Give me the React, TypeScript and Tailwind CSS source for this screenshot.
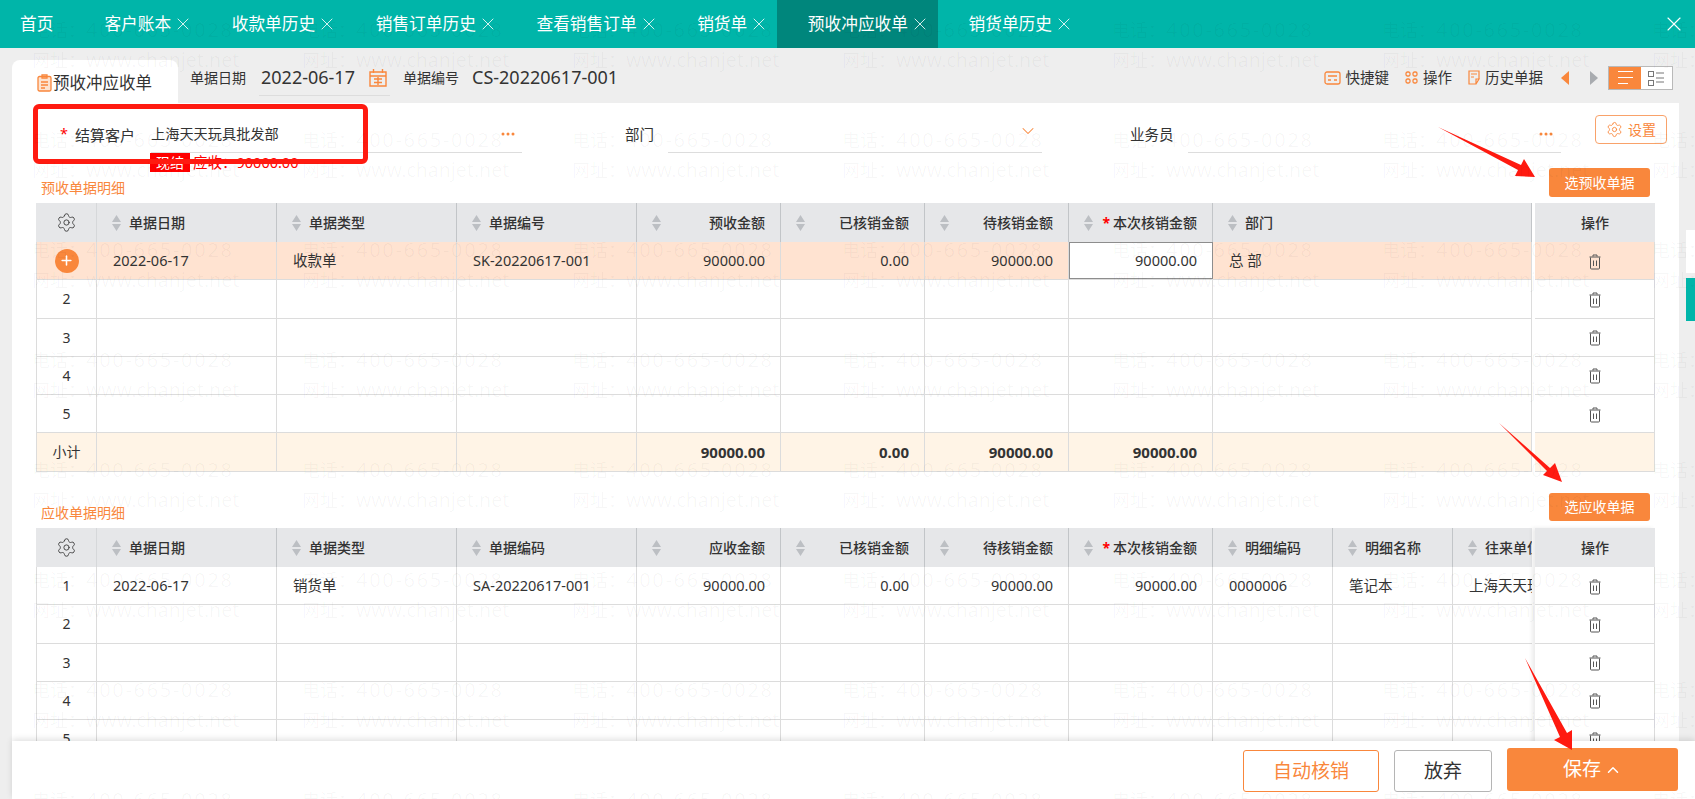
import { Settings, X, ChevronDown, ChevronUp, Plus } from "lucide-react"

const tabs = [
  { label: "客户账本" },
  { label: "收款单历史" },
  { label: "销售订单历史" },
  { label: "查看销售订单" },
  { label: "销货单" },
  { label: "预收冲应收单", active: true },
  { label: "销货单历史" },
]

interface Column {
  label: string
  right?: boolean
  required?: boolean
}

const advanceCols: Column[] = [
  { label: "单据日期" },
  { label: "单据类型" },
  { label: "单据编号" },
  { label: "预收金额", right: true },
  { label: "已核销金额", right: true },
  { label: "待核销金额", right: true },
  { label: "本次核销金额", right: true, required: true },
  { label: "部门" },
]

const receivableCols: Column[] = [
  { label: "单据日期" },
  { label: "单据类型" },
  { label: "单据编码" },
  { label: "应收金额", right: true },
  { label: "已核销金额", right: true },
  { label: "待核销金额", right: true },
  { label: "本次核销金额", right: true, required: true },
  { label: "明细编码" },
  { label: "明细名称" },
  { label: "往来单位" },
]

const Sort = () => (
  <svg width="9" height="16" viewBox="0 0 9 16" className="shrink-0">
    <path d="M4.5 0 L9 7 H0 Z M4.5 16 L0 9 H9 Z" fill="#bcbfc3" />
  </svg>
)

const Trash = () => (
  <svg width="14" height="16" viewBox="0 0 14 16" fill="none" stroke="#555" strokeWidth="1" className="mt-[2px]">
    <path d="M5 2.5V1h4v1.5M1.5 3h11M2.5 3.5v10.5a1 1 0 0 0 1 1h7a1 1 0 0 0 1-1V3.5M5.5 6.5v5.5M8.5 6.5v5.5" />
  </svg>
)

const Dots = () => (
  <svg width="14" height="4" viewBox="0 0 14 4" fill="#f9873c">
    <circle cx="2" cy="2" r="1.5" />
    <circle cx="7" cy="2" r="1.5" />
    <circle cx="12" cy="2" r="1.5" />
  </svg>
)

interface TableProps {
  grid: string
  cols: Column[]
  rows: string[][]
  highlightFirst?: boolean
  total?: string[]
  shadow?: boolean
}

const DataTable = ({ grid, cols, rows, highlightFirst, total, shadow }: TableProps) => {
  const cellText = (col: Column) => (col.right ? "justify-end pr-[15px]" : "pl-[16px]")
  return (
    <div className="flex gap-[3px]">
      <div className="w-[1496px] overflow-hidden">
        <div className={`grid h-[39px] bg-[#e6e7e9] ${grid}`}>
          <div className="flex items-center justify-center border-r border-[#d6d8da]">
            <Settings size={21} strokeWidth={1.1} className="text-[#444]" />
          </div>
          {cols.map((col) => (
            <div key={col.label} className="flex items-center overflow-hidden whitespace-nowrap border-r border-[#c2c5c8] pl-[15px] pr-[15px] text-[14px] font-medium text-[#333]">
              <Sort />
              <span className={col.right ? "ml-auto" : "ml-[8px]"}>
                {col.required && <span className="mr-[3px] font-bold text-[#f00]">*</span>}
                {col.label}
              </span>
            </div>
          ))}
        </div>
        {rows.map((row, i) => (
          <div key={i} className={`grid h-[38.25px] border-b border-[#dcdcdc] ${grid} ${highlightFirst && i === 0 ? "bg-[#ffe3d1]" : ""}`}>
            <div className="flex items-center justify-center border-x border-[#dcdcdc] text-[14px] text-[#333]">
              {highlightFirst && i === 0 ? (
                <span className="flex size-[24px] items-center justify-center rounded-full bg-[#f9873c]">
                  <Plus size={15} strokeWidth={2.5} className="text-white" />
                </span>
              ) : (
                i + 1
              )}
            </div>
            {cols.map((col, j) => {
              const isInput = highlightFirst && i === 0 && col.required
              return (
                <div key={col.label} className={`flex items-center overflow-hidden whitespace-nowrap border-r text-[14.5px] text-[#333] ${cellText(col)} ${isInput ? "border border-[#8d8d8d] bg-white" : "border-[#dcdcdc]"}`}>
                  {row[j]}
                </div>
              )
            })}
          </div>
        ))}
        {total && (
          <div className={`grid h-[38.25px] border-b border-[#dcdcdc] bg-[#fff4e6] ${grid}`}>
            <div className="flex items-center justify-center border-x border-[#dcdcdc] text-[14px] text-[#333]">小计</div>
            {cols.map((col, j) => (
              <div key={col.label} className={`flex items-center border-r border-[#dcdcdc] text-[15px] font-bold text-[#333] ${cellText(col)}`}>
                {total[j]}
              </div>
            ))}
          </div>
        )}
      </div>
      <div className={`w-[120px] ${shadow ? "shadow-[-3px_0_4px_rgba(0,0,0,0.08)]" : ""}`}>
        <div className="flex h-[39px] items-center justify-center bg-[#e6e7e9] text-[14px] font-medium text-[#333]">操作</div>
        {rows.map((_, i) => (
          <div key={i} className={`flex h-[38.25px] items-center justify-center border-b border-r border-[#dcdcdc] ${highlightFirst && i === 0 ? "bg-[#ffe3d1]" : ""}`}>
            <Trash />
          </div>
        ))}
        {total && <div className="h-[38.25px] border-b border-r border-[#dcdcdc] bg-[#fff4e6]" />}
      </div>
    </div>
  )
}

const Watermark = () => (
  <div className="pointer-events-none absolute inset-0 z-30 overflow-hidden">
    {Array.from({ length: 8 }).map((_, r) => (
      <div key={r} className="flex h-[110px] pl-[32px] pt-[15px]">
        {Array.from({ length: 7 }).map((_, c) => (
          <div key={c} className="w-[270px] shrink-0 whitespace-nowrap text-[rgba(0,0,0,0.035)]">
            <div className="h-[30px] text-[20px] leading-[30px] tracking-[1.7px]">
              <span className="text-[18px] tracking-normal">电话：</span>400-665-0028
            </div>
            <div className="h-[30px] text-[19.5px] leading-[30px]">
              <span className="text-[18px]">网址：</span>www.chanjet.net
            </div>
          </div>
        ))}
      </div>
    ))}
  </div>
)

export default function App() {
  return (
    <div className="relative flex h-screen flex-col overflow-hidden bg-[#eee] font-['Noto_Sans','Noto_Sans_CJK_SC',sans-serif]">
      {/* tab bar */}
      <div className="flex h-12 shrink-0 items-stretch bg-[#00b5a9] text-[16.7px] text-white">
        <div className="flex items-center pl-[20px] pr-[20px]">首页</div>
        {tabs.map((tab) => (
          <div key={tab.label} className={`flex items-center gap-[2px] pl-[31px] pr-[7.6px] ${tab.active ? "bg-[#00867c]" : ""}`}>
            {tab.label}
            <X size={20} strokeWidth={1} />
          </div>
        ))}
        <div className="ml-auto flex items-center pr-[9px]">
          <X size={24} strokeWidth={1.1} />
        </div>
      </div>

      {/* toolbar */}
      <div className="flex h-[55px] shrink-0 pl-3 pr-[22px] text-[#333]">
        <div className="mt-[12px] flex h-[43px] w-[166px] items-center gap-[1px] rounded-t-lg bg-white pl-[25px] pt-[3px] text-[16.5px]">
          <svg width="15" height="18" viewBox="0 0 15 18" fill="none" stroke="#f9873c" strokeWidth="1.3">
            <rect x="1" y="2.5" width="13" height="14.5" rx="1.5" fill="#fde3d0" />
            <path d="M5 1h5v3H5zM4 8h7M4 11h7M4 14h4" />
          </svg>
          预收冲应收单
        </div>
        <div className="ml-3 flex flex-1 items-center pt-[4px]">
          <span className="text-[14px]">单据日期</span>
          <div className="ml-[13px] flex h-[36px] w-[131px] items-center border-b border-[#ddd] pl-[2px] text-[18px]">
            2022-06-17
            <svg width="18" height="19" viewBox="0 0 18 19" fill="none" stroke="#f9873c" strokeWidth="1.4" className="ml-[14px]">
              <path d="M1 4h16v14H1zM1 8h16M4.5 1v4M13.5 1v4M5 11h8M5 14.5h8M9 9v8" />
            </svg>
          </div>
          <span className="ml-[13px] text-[14px]">单据编号</span>
          <span className="ml-[13px] text-[18px]">CS-20220617-001</span>
          <div className="ml-auto flex items-center text-[14.5px]">
            <svg width="17" height="14" viewBox="0 0 17 14" fill="none" stroke="#f9873c" strokeWidth="1.3">
              <rect x="1" y="1" width="15" height="12" rx="2" />
              <path d="M4 5h9M4 9h3M10 9h3" />
            </svg>
            <span className="ml-[5px]">快捷键</span>
            <svg width="13" height="13" viewBox="0 0 13 13" fill="none" stroke="#f9873c" strokeWidth="1.3" className="ml-[16px]">
              <rect x="1" y="1" width="4" height="4" rx="1.5" />
              <rect x="8" y="1" width="4" height="4" rx="1.5" />
              <rect x="1" y="8" width="4" height="4" rx="1.5" />
              <rect x="8" y="8" width="4" height="4" rx="1.5" />
            </svg>
            <span className="ml-[5px]">操作</span>
            <svg width="12" height="15" viewBox="0 0 12 15" fill="none" stroke="#f9873c" strokeWidth="1.2" className="ml-[16px]">
              <path d="M1 1h10v8H8v5H1zM3 4h6M3 7h3M8 9l3 0-3 5" />
            </svg>
            <span className="ml-[5px]">历史单据</span>
            <svg width="8" height="14" viewBox="0 0 8 14" className="ml-[18px]">
              <path d="M8 0v14L0 7z" fill="#f9873c" />
            </svg>
            <svg width="8" height="14" viewBox="0 0 8 14" className="ml-[21px]">
              <path d="M0 0v14l8-7z" fill="#a8abaf" />
            </svg>
            <div className="ml-[10px] flex h-[24px] w-[65px] border border-[#b9b9b9] bg-white">
              <div className="flex w-[32px] flex-col items-center justify-center gap-[5px] bg-[#f9873c]">
                <span className="h-[1px] w-[15px] bg-white" />
                <span className="h-[1px] w-[15px] bg-white" />
                <span className="h-[1px] w-[10px] self-start ml-[9px] bg-white" />
              </div>
              <svg width="31" height="22" viewBox="0 0 31 22" fill="none" stroke="#777" strokeWidth="1">
                <rect x="7.5" y="4.5" width="5" height="5" />
                <rect x="7.5" y="13.5" width="5" height="5" />
                <path d="M15 6h8M15 11h8M15 15h8" />
              </svg>
            </div>
          </div>
        </div>
      </div>

      {/* form and tables */}
      <div className="mr-4 ml-3 min-h-0 flex-1 overflow-hidden bg-white px-6">
        <div className="flex h-[50px] text-[14.5px] text-[#333]">
          <div className="ml-[24px] flex w-[462px] items-center">
            <span className="mt-[12px] text-[#f00]">*</span>
            <span className="mt-[14px] ml-[7px] w-[76px] shrink-0 text-[15px]">结算客户</span>
            <div className="flex h-full flex-1 items-center justify-between border-b border-[#ddd] pt-[12px] pr-[7px]">
              <span className="text-[14.2px]">上海天天玩具批发部</span>
              <Dots />
            </div>
          </div>
          <div className="ml-[103px] flex w-[417px] items-center">
            <span className="mt-[14px] w-[43px] shrink-0">部门</span>
            <div className="flex h-full flex-1 items-center justify-end border-b border-[#ddd] pr-[4px] pt-[6px]">
              <ChevronDown size={20} strokeWidth={1.25} className="text-[#f9873c]" />
            </div>
          </div>
          <div className="ml-[88px] flex w-[431px] items-center">
            <span className="mt-[14px] w-[58px] shrink-0">业务员</span>
            <div className="flex h-full flex-1 items-center justify-end border-b border-[#ddd] pt-[12px] pr-[8px]">
              <Dots />
            </div>
          </div>
          <div className="mt-[12px] ml-[34px] -mr-3 flex h-[29px] w-[72px] shrink-0 items-center justify-center gap-[5px] rounded-[4px] border border-[#f9a26a] text-[14px] text-[#f9873c]">
            <Settings size={17} strokeWidth={1.25} />
            设置
          </div>
        </div>

        <div className="flex h-[50px] justify-between">
          <div>
            <div className="ml-[114px] flex h-[19px] items-center">
              <span className="flex h-[19px] w-[40px] items-center justify-center bg-[#f00] text-[14px] text-white">现结</span>
              <span className="ml-[3px] text-[14.5px] text-[#f00]">应收：90000.00</span>
            </div>
            <div className="mt-[5px] ml-[5px] text-[14px] text-[#f9873c]">预收单据明细</div>
          </div>
          <div className="mt-[15px] mr-[5px] flex h-[29px] w-[101px] items-center justify-center rounded-[3px] bg-[#f9873c] text-[14px] text-white">选预收单据</div>
        </div>

        <DataTable
          grid="grid-cols-[61px_180px_180px_180px_144px_144px_144px_144px_319px]"
          cols={advanceCols}
          highlightFirst
          rows={[
            ["2022-06-17", "收款单", "SK-20220617-001", "90000.00", "0.00", "90000.00", "90000.00", "总 部"],
            [], [], [], [],
          ]}
          total={["", "", "", "90000.00", "0.00", "90000.00", "90000.00", ""]}
        />

        <div className="flex h-[56.5px] justify-between">
          <div className="mt-[30px] ml-[5px] text-[14px] text-[#f9873c]">应收单据明细</div>
          <div className="mt-[21px] mr-[5px] flex h-[28px] w-[101px] items-center justify-center rounded-[3px] bg-[#f9873c] text-[14px] text-white">选应收单据</div>
        </div>

        <DataTable
          grid="grid-cols-[61px_180px_180px_180px_144px_144px_144px_144px_120px_120px_120px]"
          cols={receivableCols}
          shadow
          rows={[
            ["2022-06-17", "销货单", "SA-20220617-001", "90000.00", "0.00", "90000.00", "90000.00", "0000006", "笔记本", "上海天天玩具批发部"],
            [], [], [], [],
          ]}
        />
      </div>

      {/* footer */}
      <div className="relative z-10 ml-3 flex h-[58px] shrink-0 items-start justify-end gap-[15px] bg-white pr-[17px] shadow-[0_-2px_6px_rgba(0,0,0,0.12)]">
        <div className="mt-[9px] flex h-[42px] w-[136px] items-center justify-center rounded-[3px] border border-[#f9873c] text-[19px] text-[#f9873c]">自动核销</div>
        <div className="mt-[9px] flex h-[42px] w-[98px] items-center justify-center rounded-[3px] border border-[#b5b5b5] text-[19px] text-[#333]">放弃</div>
        <div className="mt-[7px] flex h-[43px] w-[171px] items-center justify-center gap-[3px] rounded-[3px] bg-[#f9873c] text-[19px] text-white">
          保存
          <ChevronUp size={18} strokeWidth={2} />
        </div>
      </div>

      {/* right edge scroll tabs */}
      <div className="absolute top-[230px] right-0 h-[43px] w-[9px] bg-white" />
      <div className="absolute top-[278px] right-0 h-[43px] w-[9px] bg-[#00b5a9]" />

      {/* red annotations */}
      <div className="absolute top-[104px] left-[33px] z-20 h-[60px] w-[335px] rounded-md border-[5px] border-[#ff1a10]" />
      <svg className="pointer-events-none absolute inset-0 z-20" width="1695" height="799" viewBox="0 0 1695 799">
        <path d="M1438 127 L1521 165 L1524 159 L1535 177 L1515 176 L1518 170 Z" fill="#ff1a10" />
        <path d="M1499 423 L1550 468 L1555 463 L1562 482 L1543 475 L1547 471 Z" fill="#ff1a10" />
        <path d="M1525 658 L1567 733 L1572 730 L1572 750 L1554 740 L1560 737 Z" fill="#ff1a10" />
      </svg>

      <Watermark />
    </div>
  )
}
